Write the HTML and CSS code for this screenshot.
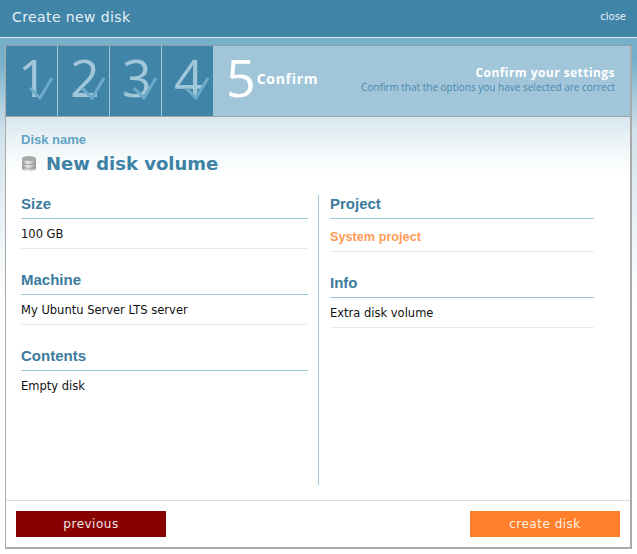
FILE: index.html
```html
<!DOCTYPE html>
<html lang="en">
<head>
<meta charset="utf-8">
<title>Create new disk</title>
<link rel="stylesheet" href="styles.css">
</head>
<body>
<div class="dialog">
  <header class="titlebar">
    <h1 class="title">Create new disk</h1>
    <a class="close">close</a>
  </header>
  <div class="frame">
    <div class="panel">
      <nav class="steps">
        <div class="step"><svg class="tick" viewBox="0 0 26 24"><path d="M2 12l10 10L24 2" /></svg><span class="num">1</span></div>
        <div class="step"><svg class="tick" viewBox="0 0 26 24"><path d="M2 12l10 10L24 2" /></svg><span class="num">2</span></div>
        <div class="step"><svg class="tick" viewBox="0 0 26 24"><path d="M2 12l10 10L24 2" /></svg><span class="num">3</span></div>
        <div class="step last"><svg class="tick" viewBox="0 0 26 24"><path d="M2 12l10 10L24 2" /></svg><span class="num">4</span></div>
        <div class="current">
          <span class="curnum">5</span>
          <span class="curlabel">Confirm</span>
          <div class="hint">
            <div class="hint-title">Confirm your settings</div>
            <div class="hint-sub">Confirm that the options you have selected are correct</div>
          </div>
        </div>
      </nav>
      <main class="content">
        <div class="disk-label">Disk name</div>
        <div class="disk-name">
          <svg class="disk-icon" viewBox="0 0 14 15">
            <defs><linearGradient id="g" x1="0" x2="1" y1="0" y2="0"><stop offset="0" stop-color="#9a9a9a"/><stop offset=".4" stop-color="#ececec"/><stop offset="1" stop-color="#9c9c9c"/></linearGradient></defs>
            <path d="M0 2.500v10c0 1.400 3 2.500 7 2.500s7-1.100 7-2.500v-10z" fill="url(#g)"/>
            <ellipse cx="7" cy="2.500" rx="7" ry="2.500" fill="#a8a8a8"/>
            <path d="M0 6c0 1.400 3 2.500 7 2.500S14 7.400 14 6M0 9.800c0 1.400 3 2.500 7 2.500s7-1.100 7-2.500" fill="none" stroke="#8a8a8a" stroke-width=".8"/>
          </svg>
          <h2 class="disk-title">New disk volume</h2>
        </div>
        <div class="columns">
          <section class="col left">
            <div class="group"><h3 class="head">Size</h3><div class="val">100 GB</div></div>
            <div class="group"><h3 class="head">Machine</h3><div class="val">My Ubuntu Server LTS server</div></div>
            <div class="group"><h3 class="head">Contents</h3><div class="val plain">Empty disk</div></div>
          </section>
          <section class="col right">
            <div class="group"><h3 class="head">Project</h3><div class="val project">System project</div></div>
            <div class="group"><h3 class="head grey">Info</h3><div class="val">Extra disk volume</div></div>
          </section>
        </div>
      </main>
      <footer class="actions">
        <button class="btn prev">previous</button>
        <button class="btn next">create disk</button>
      </footer>
    </div>
  </div>
</div>
</body>
</html>
```
FILE: styles.css
```css
* { box-sizing: border-box; }
html, body { margin: 0; height: 100%; }
body { font-family: "DejaVu Sans", sans-serif; background: #fff; overflow: hidden; }
.dialog { width: 637px; height: 554px; display: flex; flex-direction: column; background: linear-gradient(#76afca 0, #76afca 60px, #d0e2ea 130px, #fff 300px); }
.titlebar { height: 38px; flex: none; background: #4084a8; border-bottom: 1px solid #d6e8f0; display: flex; justify-content: space-between; padding: 0 11px 0 12px; color: #e6f0f5; }
.title { margin: 0; font-size: 14px; font-weight: 400; line-height: 34px; letter-spacing: .4px; }
.close { font-size: 10px; line-height: 33px; }
.frame { flex: 1; padding: 7px 5px 5px 5px; }
.panel { height: 100%; background: #fff; border: 1px solid #aaa; border-top-color: #8f9ea6; border-width: 1px 2px 2px 1px; display: flex; flex-direction: column; }
.steps { height: 71px; flex: none; display: flex; background: #a1c6da; border-bottom: 1px solid #a5a5a5; }
.step { width: 52px; background: #4084a8; border-right: 1px solid #a1c6da; position: relative; }
.step.last { width: 51px; border-right: 0; }
.num { position: absolute; left: 12px; top: 1px; font-family: "Open Sans", sans-serif; font-weight: 400; font-size: 52px; line-height: 60px; color: #a1c6da; }
.tick { position: absolute; left: 22px; top: 30px; width: 26px; height: 24px; z-index: 1; }
.tick path { fill: none; stroke: #6eaaca; stroke-width: 3; }
.current { flex: 1; display: flex; align-items: flex-start; position: relative; padding-left: 13px; }
.curnum { font-family: "Open Sans", sans-serif; font-weight: 400; font-size: 52px; line-height: 60px; margin-top: 1px; color: #fff; }
.curlabel { font-family: "Open Sans", sans-serif; font-weight: 700; font-size: 14px; color: #fff; margin: 24px 0 0 1px; letter-spacing: .7px; line-height: 18px; }
.hint { position: absolute; right: 15px; top: 19px; text-align: right; }
.hint-title { font-family: "Open Sans", sans-serif; font-weight: 700; font-size: 12px; line-height: 16px; color: #fff; letter-spacing: .45px; }
.hint-sub { font-family: "Open Sans", sans-serif; font-size: 10px; line-height: 13px; color: #4a88aa; }
.content { flex: 1; min-height: 0; padding: 15px 15px 0; background: linear-gradient(#d9e7ef 0, #f6fafb 40px, #fff 60px); }
.disk-label { font-family: "Liberation Sans", sans-serif; font-weight: 700; font-size: 13px; line-height: 16px; color: #62a4c4; }
.disk-name { display: flex; align-items: center; height: 27px; margin-top: 2px; }
.disk-icon { width: 14px; height: 15px; margin: 0 10px 0 1px; }
.disk-title { margin: 0; font-size: 18px; font-weight: 700; line-height: 27px; color: #3d81a5; }
.columns { display: flex; margin-top: 18px; height: 290px; }
.col { display: flex; flex-direction: column; }
.left { width: 298px; padding-right: 11px; }
.right { width: 276px; margin-left: -1px; border-left: 1px solid #a1c6da; padding-left: 11px; }
.head { margin: 0; height: 24px; font-family: "Liberation Sans", sans-serif; font-size: 15px; font-weight: 700; line-height: 18px; color: #3c7b9d; border-bottom: 1px solid #97c6df; }
.head.grey { border-bottom-color: #a0bfd2; }
.val { height: 30px; font-size: 11.500px; line-height: 30px; color: #111; border-bottom: 1px solid #eaeaea; }
.val.plain { border-bottom: 0; }
.val.project { height: 33px; line-height: 36px; font-family: "Liberation Sans", sans-serif; font-size: 12.700px; font-weight: 700; color: #fe9a56; }
.group { margin-bottom: 22px; }
.actions { height: 47px; flex: none; margin-top: auto; border-top: 1px solid #d8dcdf; display: flex; justify-content: space-between; padding: 10px 10px 0; }
.btn { width: 150px; height: 26px; border: 0; padding: 0; font-family: "DejaVu Sans", sans-serif; font-size: 12px; letter-spacing: .5px; color: #f0e6e6; }
.prev { background: #880000; }
.next { background: #ff7f2a; color: #fff0e4; }
```
